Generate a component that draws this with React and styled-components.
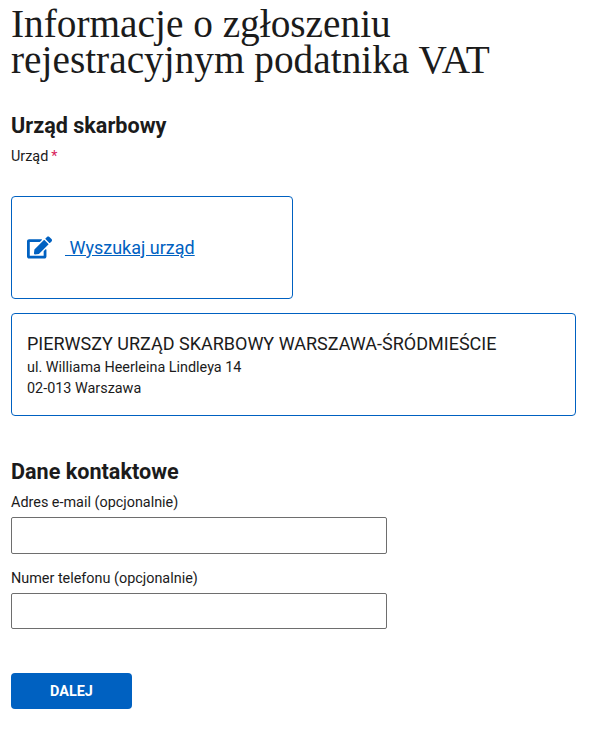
import styled, { createGlobalStyle } from 'styled-components';
import { FaEdit } from 'react-icons/fa';

const GlobalStyle = createGlobalStyle`
  * {
    box-sizing: border-box;
  }

  body {
    margin: 0;
    background: #ffffff;
    color: #1b1b1b;
    font-family: Roboto, "Noto Sans", sans-serif;
  }
`;

const Page = styled.main`
  width: 597px;
  height: 732px;
  padding: 6px 21px 0 11px;
  overflow: hidden;
`;

const Title = styled.h1`
  margin: 0 0 34px;
  font-family: "Liberation Serif", serif;
  font-weight: 400;
  font-size: 39.3px;
  line-height: 36px;
  color: #1b1b1b;
`;

const SectionTitle = styled.h2`
  margin: 0 0 6px;
  font-size: 21.6px;
  font-weight: 700;
  line-height: 28px;
`;

const Label = styled.label`
  display: block;
  font-size: 14.4px;
  line-height: 22px;
  color: #1b1b1b;
`;

const Required = styled.span`
  margin-left: 3px;
  color: #d81e5b;
`;

const SearchCard = styled.div`
  display: flex;
  align-items: center;
  width: 282px;
  height: 103px;
  margin-top: 28px;
  padding-left: 15px;
  border: 1px solid #0061c1;
  border-radius: 4px;
`;

const SearchLink = styled.a`
  margin-left: 13px;
  font-size: 18px;
  line-height: 24px;
  color: #0061c1;
  text-decoration: underline;
  white-space: pre;
`;

const OfficeCard = styled.div`
  width: 565px;
  height: 103px;
  margin-top: 14px;
  padding: 18px 15px 0;
  border: 1px solid #0061c1;
  border-radius: 4px;
`;

const OfficeName = styled.div`
  font-size: 18px;
  line-height: 24px;
  margin-bottom: 1px;
`;

const OfficeLine = styled.div`
  font-size: 14.4px;
  line-height: 21px;
`;

const ContactSection = styled.section`
  margin-top: 42px;
`;

const Field = styled.div`
  margin-bottom: 14px;
`;

const Input = styled.input`
  display: block;
  width: 376px;
  height: ${({ $height }) => $height}px;
  margin-top: 3px;
  border: 1px solid #6e6e6e;
  border-radius: 2px;
  background: #ffffff;
`;

const SubmitButton = styled.button`
  display: block;
  width: 121px;
  height: 36px;
  margin-top: 44px;
  border: 0;
  border-radius: 4px;
  background: #0061c1;
  color: #ffffff;
  font-family: inherit;
  font-size: 14.4px;
  font-weight: 700;
`;

export default function App() {
  return (
    <Page>
      <GlobalStyle />
      <Title>
        Informacje o zgłoszeniu
        <br />
        rejestracyjnym podatnika VAT
      </Title>
      <SectionTitle>Urząd skarbowy</SectionTitle>
      <Label>
        Urząd<Required>*</Required>
      </Label>
      <SearchCard>
        <FaEdit size={25} color="#0061c1" />
        <SearchLink href="#"> Wyszukaj urząd</SearchLink>
      </SearchCard>
      <OfficeCard>
        <OfficeName>PIERWSZY URZĄD SKARBOWY WARSZAWA-ŚRÓDMIEŚCIE</OfficeName>
        <OfficeLine>ul. Williama Heerleina Lindleya 14</OfficeLine>
        <OfficeLine>02-013 Warszawa</OfficeLine>
      </OfficeCard>
      <ContactSection>
        <SectionTitle>Dane kontaktowe</SectionTitle>
        <Field>
          <Label>Adres e-mail (opcjonalnie)</Label>
          <Input type="email" $height={37} />
        </Field>
        <Field>
          <Label>Numer telefonu (opcjonalnie)</Label>
          <Input type="tel" $height={36} />
        </Field>
      </ContactSection>
      <SubmitButton type="button">DALEJ</SubmitButton>
    </Page>
  );
}
